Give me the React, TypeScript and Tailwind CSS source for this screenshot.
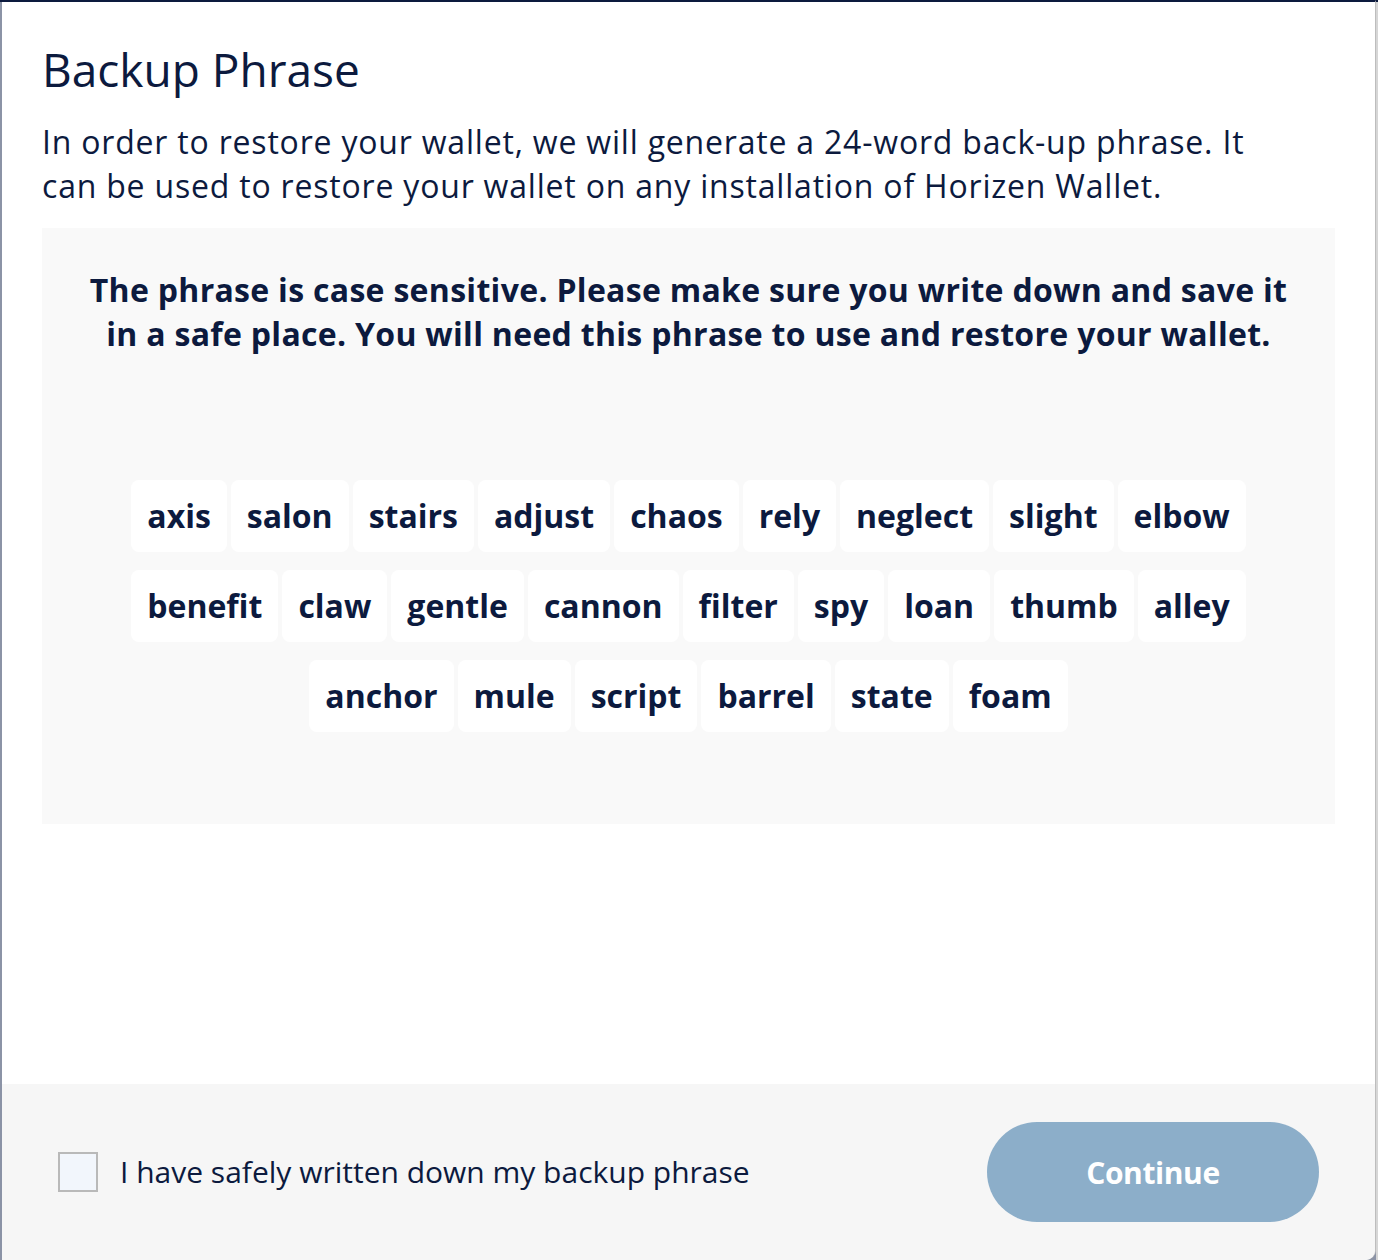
import React from 'react';

const rows: string[][] = [
  ['axis', 'salon', 'stairs', 'adjust', 'chaos', 'rely', 'neglect', 'slight', 'elbow'],
  ['benefit', 'claw', 'gentle', 'cannon', 'filter', 'spy', 'loan', 'thumb', 'alley'],
  ['anchor', 'mule', 'script', 'barrel', 'state', 'foam'],
];

const WordChip = ({ word }: { word: string }) => (
  <div className="h-[72px] px-[16px] flex items-center bg-white rounded-[8px] text-[32px] font-bold leading-[38px] text-[#0c1a3e]">
    {word}
  </div>
);

const App = () => {
  return (
    <div
      className="w-[1378px] h-[1260px] flex bg-[#8b93a6] overflow-hidden"
      style={{ fontFamily: '"Open Sans", "Noto Sans", sans-serif' }}
    >
      <div className="w-[2px] shrink-0 border-t-2 border-[#0c1a3e]" />
      <div className="w-[1374px] shrink-0 h-[1260px] flex flex-col bg-white border-t-2 border-[#0c1a3e] border-r border-r-[#bdbdbd] rounded-br-[10px] overflow-hidden text-[#0c1a3e]">
        <div className="px-[40px] pt-[39px]">
          <h1 className="text-[46px] leading-[56px] font-normal">Backup Phrase</h1>
          <p className="mt-[23px] max-w-[1230px] text-[32px] leading-[44px] tracking-[0.8px]">
            In order to restore your wallet, we will generate a 24-word back-up phrase. It can be used to restore your wallet on any installation of Horizen Wallet.
          </p>
          <div className="mt-[20px] h-[596px] bg-[#f9f9f9] pt-[40px] flex flex-col items-center">
            <p className="text-[32px] leading-[44px] font-bold tracking-[0.3px] text-center px-[30px]">
              The phrase is case sensitive. Please make sure you write down and save it in a safe place. You will need this phrase to use and restore your wallet.
            </p>
            <div className="mt-[124px] flex flex-col gap-[18px]">
              {rows.map((row, i) => (
                <div key={i} className="flex justify-center gap-[4px]">
                  {row.map((w) => (
                    <WordChip key={w} word={w} />
                  ))}
                </div>
              ))}
            </div>
          </div>
        </div>

        <div className="mt-auto h-[176px] bg-[#f6f6f6] flex items-center justify-between pl-[56px] pr-[56px]">
          <label className="flex items-center gap-[22px]">
            <span className="w-[40px] h-[40px] border-2 border-[#b9b9b9] bg-[#f2f6fc]" />
            <span className="text-[30px] leading-[40px]">I have safely written down my backup phrase</span>
          </label>
          <button className="w-[332px] h-[100px] rounded-full bg-[#8caec9] text-white text-[30px] tracking-[-0.4px] font-bold">
            Continue
          </button>
        </div>
      </div>
      <div className="flex-1 bg-[#d6d6d6] border-t-2 border-[#0c1a3e]" />
    </div>
  );
};

export default App;
